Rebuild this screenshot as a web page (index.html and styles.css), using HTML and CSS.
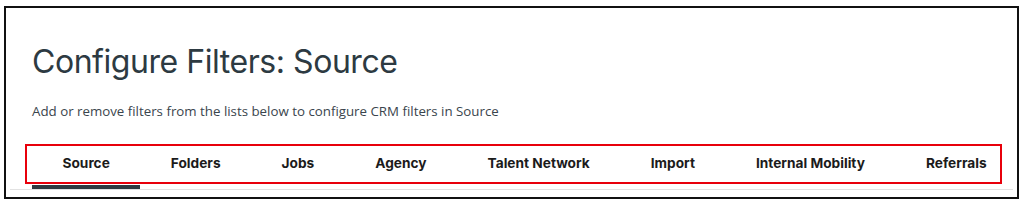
FILE: index.html
```html
<html lang="en">
<head>
<meta charset="utf-8"/>
<title>Configure Filters: Source</title>
<link rel="stylesheet" href="styles.css">
</head>
<body>

<div class="frame">
  <div class="header">
    <h1>Configure Filters: Source</h1>
    <p class="intro">Add or remove filters from the lists below to configure CRM filters in Source</p>
  </div>

  <nav class="tabs">
    <a class="tab active">Source</a>
    <a class="tab">Folders</a>
    <a class="tab">Jobs</a>
    <a class="tab">Agency</a>
    <a class="tab">Talent Network</a>
    <a class="tab">Import</a>
    <a class="tab">Internal Mobility</a>
    <a class="tab">Referrals</a>
    <span class="highlight"></span>
  </nav>
</div>

</body>
</html>
```

FILE: styles.css
```css
body {
  margin: 0;
  background: #fff;
}
.frame {
  margin: 6px 7px 0 4px;
  height: 193px;
  box-sizing: border-box;
  border: 2px solid #111;
  background: #fff;
  overflow: hidden;
}
.header {
  padding-left: 26px;
}
h1 {
  margin: 0;
  padding-top: 34px;
  font: 400 32px/40px Inter, sans-serif;
  letter-spacing: -0.45px;
  color: #2d3a42;
}
.intro {
  margin: 19px 0 0;
  font: 400 13.3px/20px "Open Sans", sans-serif;
  color: #3a454d;
}
.tabs {
  position: relative;
  display: flex;
  margin: 20px 4px 0;
  padding-left: 22px;
  border-bottom: 1px solid #e2e2e2;
}
.tab {
  flex-shrink: 0;
  white-space: nowrap;
  padding: 12px 30.5px 12px;
  border-bottom: 4px solid transparent;
  font: 700 13.7px/20px Inter, sans-serif;
  color: #1b1b1b;
}
.tab.active {
  border-bottom-color: #2e3940;
}
.highlight {
  position: absolute;
  left: 15px;
  top: 3px;
  width: 977px;
  height: 40px;
  box-sizing: border-box;
  border: 2px solid #e8000b;
}
```
